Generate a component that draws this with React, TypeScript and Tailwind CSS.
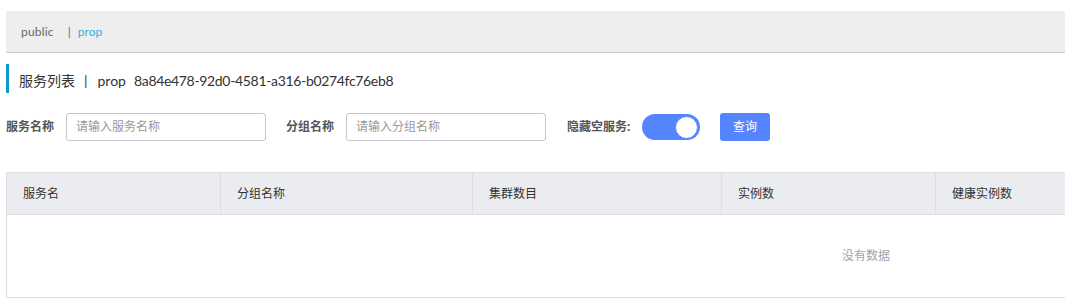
import React from "react";

const font = { fontFamily: '"Noto Sans", "Noto Sans CJK SC", sans-serif' };
const latin = { fontFamily: 'Lato, "Noto Sans CJK SC", sans-serif' };

export default function App() {
  const cols = [
    { name: "服务名", w: "w-[213px]" },
    { name: "分组名称", w: "w-[252px]" },
    { name: "集群数目", w: "w-[249px]" },
    { name: "实例数", w: "w-[214px]" },
    { name: "健康实例数", w: "w-[250px]" },
  ];
  return (
    <div
      className="w-[1065px] h-[300px] overflow-hidden bg-white pl-[6px] pt-[11px] text-[#333]"
      style={font}
    >
      <div
        className="w-[1100px] h-[42px] bg-[#eeeeee] border-b border-[#cccccc] flex items-center pl-[15px] text-[12px]"
        style={latin}
      >
        <span className="text-[#666] tracking-[0.2px]">public</span>
        <span className="ml-[14px] text-[#666]">|</span>
        <span className="ml-[7px] text-[#30b5df]">prop</span>
      </div>

      <div className="mt-[11px] h-[29px] border-l-[3px] border-[#0a9ccc] pl-[10px] flex items-center text-[14px] text-[#333] pt-[4px]">
        <span>服务列表</span>
        <span className="mx-[9px]" style={latin}>|</span>
        <span className="ml-[1px]" style={latin}>prop</span>
        <span className="ml-[8px] tracking-[-0.33px]" style={latin}>8a84e478-92d0-4581-a316-b0274fc76eb8</span>
      </div>

      <div className="mt-[20px] h-[28px] flex items-center text-[12px]">
        <span className="font-bold text-[#555] w-[60px]">服务名称</span>
        <div className="w-[200px] h-[28px] border border-[#c4c6cf] rounded-[3px] flex items-center pl-[9px] text-[#999]">
          请输入服务名称
        </div>
        <span className="font-bold text-[#555] ml-[20px] w-[60px]">分组名称</span>
        <div className="w-[200px] h-[28px] border border-[#c4c6cf] rounded-[3px] flex items-center pl-[9px] text-[#999]">
          请输入分组名称
        </div>
        <span className="font-bold text-[#555] ml-[21px] w-[75px]">隐藏空服务:</span>
        <div className="w-[58px] h-[26px] rounded-full bg-[#5584ff] flex items-center justify-end pr-[2px]">
          <div className="w-[23px] h-[23px] rounded-full bg-white border border-[#5584ff]" />
        </div>
        <div className="ml-[20px] w-[50px] h-[28px] rounded-[3px] bg-[#5584ff] text-white flex items-center justify-center">
          查询
        </div>
      </div>

      <div className="mt-[31px] w-[1720px] border border-[#dcdee3] text-[12px]">
        <div className="flex h-[42px] bg-[#ebecf0] border-b border-[#dcdee3]">
          {cols.map((c, i) => (
            <div
              key={c.name}
              className={`${c.w} flex items-center pl-[16px] text-[#333] ${i > 0 ? "border-l border-[#dcdee3]" : ""}`}
            >
              {c.name}
            </div>
          ))}
        </div>
        <div className="h-[82px] flex items-center justify-center text-[#a0a2ad]">
          没有数据
        </div>
      </div>
    </div>
  );
}
